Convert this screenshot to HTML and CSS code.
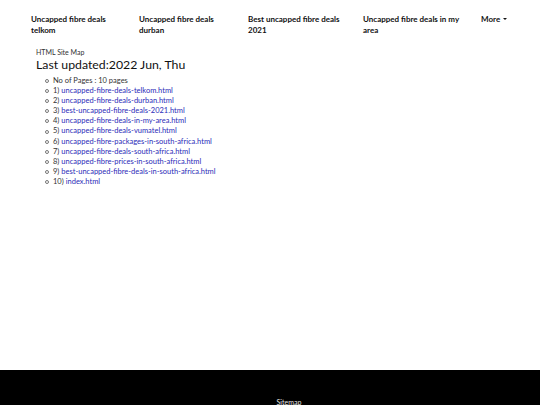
FILE: index.html
```html
<!DOCTYPE html>
<html>
<head>
<meta charset="utf-8">
<link rel="stylesheet" href="styles.css">
</head>
<body>
<div class="page">
  <nav class="nav">
    <a class="nav-item">Uncapped fibre deals telkom</a>
    <a class="nav-item">Uncapped fibre deals durban</a>
    <a class="nav-item">Best uncapped fibre deals 2021</a>
    <a class="nav-item">Uncapped fibre deals in my area</a>
    <a class="nav-item more">More <span class="caret"></span></a>
  </nav>
  <main class="main">
    <div class="subtitle">HTML Site Map</div>
    <h1 class="title">Last updated:2022 Jun, Thu</h1>
    <ul class="list">
      <li>No of Pages : 10 pages</li>
      <li>1) <a href="#">uncapped-fibre-deals-telkom.html</a></li>
      <li>2) <a href="#">uncapped-fibre-deals-durban.html</a></li>
      <li>3) <a href="#">best-uncapped-fibre-deals-2021.html</a></li>
      <li>4) <a href="#">uncapped-fibre-deals-in-my-area.html</a></li>
      <li>5) <a href="#">uncapped-fibre-deals-vumatel.html</a></li>
      <li>6) <a href="#">uncapped-fibre-packages-in-south-africa.html</a></li>
      <li>7) <a href="#">uncapped-fibre-deals-south-africa.html</a></li>
      <li>8) <a href="#">uncapped-fibre-prices-in-south-africa.html</a></li>
      <li>9) <a href="#">best-uncapped-fibre-deals-in-south-africa.html</a></li>
      <li>10) <a href="#">index.html</a></li>
    </ul>
  </main>
  <footer class="footer">
    <span class="footer-link">Sitemap</span>
  </footer>
</div>
</body>
</html>
```
FILE: styles.css
```css
html, body {
  margin: 0;
  padding: 0;
  background: #fff;
}
body {
  font-family: Lato, "Noto Sans", sans-serif;
  color: #222;
}
.page {
  display: flex;
  flex-direction: column;
  height: 405px;
}
.nav {
  display: grid;
  grid-template-columns: 108px 109px 115px 118px auto;
  padding: 14px 0 0 31px;
  height: 31px;
}
.nav-item {
  font-size: 8px;
  font-weight: 700;
  line-height: 11px;
  color: #111;
  max-width: 100px;
}
.caret {
  display: inline-block;
  width: 0;
  height: 0;
  border-left: 2px solid transparent;
  border-right: 2px solid transparent;
  border-top: 2.5px solid #111;
  vertical-align: 2px;
  margin-left: 1px;
}
.main {
  flex: 1;
  padding: 3px 0 0 36px;
}
.subtitle {
  font-size: 7px;
  line-height: 9px;
  color: #333;
}
.title {
  margin: 0 0 4px 0;
  font-family: Lato, "Noto Sans", sans-serif;
  font-weight: 400;
  font-size: 12.3px;
  line-height: 15px;
  color: #111;
}
.list {
  margin: 0;
  padding: 0 0 0 17px;
  list-style: none;
  font-size: 7.5px;
  line-height: 10.1px;
  color: #333;
}
.list li {
  display: flex;
  align-items: center;
}
.list li::before {
  content: "";
  width: 2px;
  height: 2px;
  border: 0.7px solid #777;
  border-radius: 50%;
  margin: 0 4px 0 -8px;
  flex: none;
}
.list a {
  color: #2b2bb8;
  text-decoration: none;
  margin-left: 2px;
}
.footer {
  height: 35px;
  background: #000;
  display: flex;
  justify-content: center;
  align-items: flex-end;
  padding-left: 38px;
}
.footer-link {
  color: #e8e8e8;
  font-size: 7px;
  line-height: 8px;
  margin-bottom: -1px;
}
```
